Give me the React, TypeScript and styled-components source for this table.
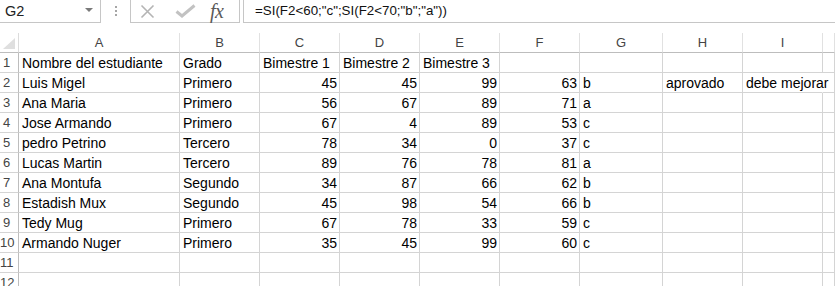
import React from 'react'
import styled, { createGlobalStyle } from 'styled-components'

const GlobalStyle = createGlobalStyle`
  html, body {
    margin: 0;
    padding: 0;
    background: #ffffff;
  }
  body {
    font-family: 'Liberation Sans', Arial, sans-serif;
    color: #000000;
    overflow: hidden;
  }
`

const Page = styled.div`
  width: 835px;
  height: 286px;
  overflow: hidden;
  background: #ffffff;
`

const FormulaBar = styled.div`
  display: flex;
  height: 23px;
`

const NameBox = styled.div`
  box-sizing: border-box;
  width: 101px;
  height: 23px;
  border-right: 1px solid #c6c6c6;
  border-bottom: 1px solid #c6c6c6;
  display: flex;
  align-items: center;
  justify-content: space-between;
  padding: 0 7px 1px 5px;
  font-size: 14.5px;
  color: #222222;
`

const DropArrow = styled.span`
  width: 0;
  height: 0;
  border-left: 4px solid transparent;
  border-right: 4px solid transparent;
  border-top: 4px solid #7a7a7a;
  margin-top: -1px;
`

const Grip = styled.div`
  width: 29px;
  display: flex;
  flex-direction: column;
  align-items: center;
  justify-content: center;
  gap: 2px;
  padding-bottom: 1px;
`

const GripDot = styled.span`
  width: 2px;
  height: 2px;
  background: #a6a6a6;
`

const EditButtons = styled.div`
  box-sizing: border-box;
  width: 110px;
  height: 23px;
  border-left: 1px solid #c6c6c6;
  border-right: 1px solid #c6c6c6;
  border-bottom: 1px solid #c6c6c6;
  display: flex;
  align-items: center;
  padding-left: 9px;
`

const IconSlot = styled.div`
  width: 35px;
  display: flex;
  align-items: center;
`

const Fx = styled.span`
  font-family: 'Liberation Serif', 'Times New Roman', serif;
  font-style: italic;
  font-size: 20px;
  line-height: 20px;
  color: #5a5a5a;
  letter-spacing: -0.5px;
`

const FormulaInput = styled.div`
  box-sizing: border-box;
  flex: 1;
  height: 23px;
  margin-left: 3px;
  border-left: 1px solid #c6c6c6;
  border-bottom: 1px solid #c6c6c6;
  padding: 0 0 1px 11px;
  display: flex;
  align-items: center;
  font-size: 13.35px;
  color: #111111;
  white-space: pre;
`

const Sheet = styled.div`
  margin-top: 10px;
  display: grid;
  grid-template-columns: 19px 161px 80px 80px 80px 80px 80px 83px 80px 80px 1fr;
  grid-auto-rows: 20px;
`

const Corner = styled.div`
  box-sizing: border-box;
  position: relative;
  border-right: 1px solid #dcdcdc;
  border-bottom: 1px solid #bdbdbd;
`

const CornerMark = styled.span`
  position: absolute;
  right: 3px;
  bottom: 3px;
  width: 0;
  height: 0;
  border-left: 12px solid transparent;
  border-bottom: 11px solid #dfdfdf;
`

const ColHeader = styled.div`
  box-sizing: border-box;
  border-right: 1px solid #e1e1e1;
  border-bottom: 1px solid #bdbdbd;
  text-align: center;
  font-size: 13px;
  line-height: 19px;
  color: #444444;
`

const RowHeader = styled.div`
  box-sizing: border-box;
  border-right: 1px solid #bdbdbd;
  border-bottom: 1px solid #d4d4d4;
  text-align: center;
  padding-right: 5px;
  font-size: 13px;
  line-height: 20px;
  color: #444444;
  white-space: nowrap;
`

const Cell = styled.div<{ $num?: boolean; $spill?: boolean }>`
  box-sizing: border-box;
  height: 20px;
  border-right: 1px solid ${({ $spill }) => ($spill ? 'transparent' : '#d4d4d4')};
  border-bottom: 1px solid #d4d4d4;
  padding: 0 ${({ $num }) => ($num ? '2px' : '0')} 0 ${({ $num }) => ($num ? '0' : '3px')};
  text-align: ${({ $num }) => ($num ? 'right' : 'left')};
  font-size: 14px;
  line-height: 20px;
  white-space: nowrap;
  overflow: visible;
`

type Value = string | number | null

const columns = ['A', 'B', 'C', 'D', 'E', 'F', 'G', 'H', 'I', '']

const rows: Value[][] = [
  ['Nombre del estudiante', 'Grado', 'Bimestre 1', 'Bimestre 2', 'Bimestre 3', null, null, null, null, null],
  ['Luis Migel', 'Primero', 45, 45, 99, 63, 'b', 'aprovado', 'debe mejorar', null],
  ['Ana Maria', 'Primero', 56, 67, 89, 71, 'a', null, null, null],
  ['Jose Armando', 'Primero', 67, 4, 89, 53, 'c', null, null, null],
  ['pedro Petrino', 'Tercero', 78, 34, 0, 37, 'c', null, null, null],
  ['Lucas Martin', 'Tercero', 89, 76, 78, 81, 'a', null, null, null],
  ['Ana Montufa', 'Segundo', 34, 87, 66, 62, 'b', null, null, null],
  ['Estadish Mux', 'Segundo', 45, 98, 54, 66, 'b', null, null, null],
  ['Tedy Mug', 'Primero', 67, 78, 33, 59, 'c', null, null, null],
  ['Armando Nuger', 'Primero', 35, 45, 99, 60, 'c', null, null, null],
  [null, null, null, null, null, null, null, null, null, null],
  [null, null, null, null, null, null, null, null, null, null],
]

// text in column I row 2 runs over into the next (empty) column, as in the sheet
const spills = (row: Value[], c: number) =>
  typeof row[c] === 'string' && c + 1 < row.length && row[c + 1] === null && c === 8

const CancelIcon = () => (
  <svg width="15" height="15" viewBox="0 0 15 15">
    <path d="M1.5 1.5 L13.5 13.5 M13.5 1.5 L1.5 13.5" stroke="#b4b4b4" strokeWidth="1.6" fill="none" />
  </svg>
)

const EnterIcon = () => (
  <svg width="21" height="14" viewBox="0 0 21 14">
    <path d="M1.5 7.5 L7 12 L19.5 1.5" stroke="#c2c2c2" strokeWidth="3" fill="none" strokeLinejoin="miter" />
  </svg>
)

export default function App() {
  return (
    <Page>
      <GlobalStyle />
      <FormulaBar>
        <NameBox>
          <span>G2</span>
          <DropArrow />
        </NameBox>
        <Grip>
          <GripDot />
          <GripDot />
          <GripDot />
        </Grip>
        <EditButtons>
          <IconSlot>
            <CancelIcon />
          </IconSlot>
          <IconSlot>
            <EnterIcon />
          </IconSlot>
          <Fx>fx</Fx>
        </EditButtons>
        <FormulaInput>{'=SI(F2<60;"c";SI(F2<70;"b";"a"))'}</FormulaInput>
      </FormulaBar>
      <Sheet>
        <Corner>
          <CornerMark />
        </Corner>
        {columns.map((c, i) => (
          <ColHeader key={i}>{c}</ColHeader>
        ))}
        {rows.map((row, r) => (
          <React.Fragment key={r}>
            <RowHeader>{r + 1}</RowHeader>
            {row.map((v, c) => (
              <Cell key={c} $num={typeof v === 'number'} $spill={spills(row, c)}>
                {v}
              </Cell>
            ))}
          </React.Fragment>
        ))}
      </Sheet>
    </Page>
  )
}
